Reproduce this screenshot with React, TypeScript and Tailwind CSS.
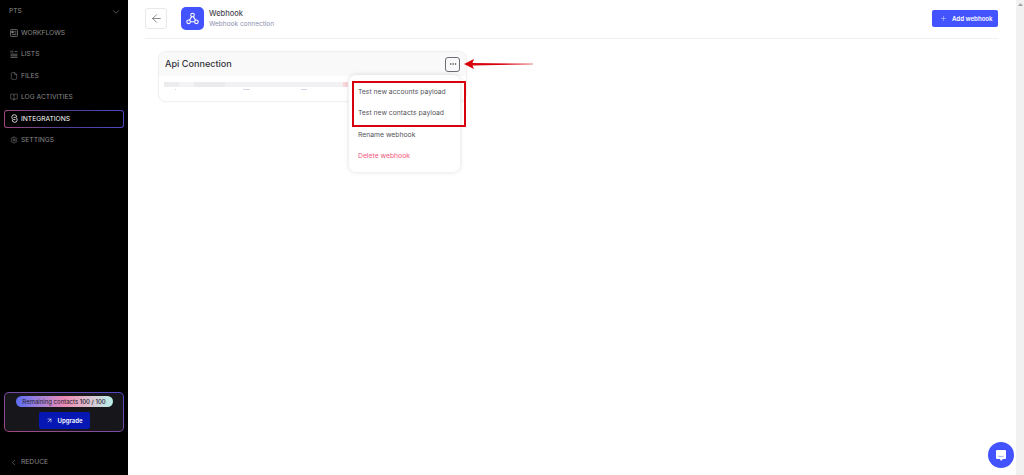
import { ArrowLeft, ArrowUpRight, BookOpen, ChevronDown, ChevronLeft, Ellipsis, File, Plus, Settings } from 'lucide-react';

function WorkflowsIcon() {
  return (
    <svg className="h-[8px] w-[8px]" viewBox="0 0 8 8" fill="none" stroke="currentColor" strokeWidth="0.7">
      <rect x="0.5" y="0.5" width="7" height="7" rx="1" />
      <rect x="1.8" y="2.2" width="1.6" height="1.6" />
      <path d="M4.5 2.4H6.4M4.5 4H6.4M1.8 5.6H6.4" />
    </svg>
  );
}

function ListsIcon() {
  return (
    <svg className="h-[8px] w-[8px]" viewBox="0 0 8 8" fill="none" stroke="currentColor" strokeWidth="0.7">
      <path d="M0.5 4.2H7.5M0.5 5.8H7.5M0.5 7.4H7.5M1 0.6V2.6M2.8 0.6V2.6M4.8 1.6H7.5" />
    </svg>
  );
}

function IntegrationsIcon() {
  return (
    <svg className="h-[9px] w-[9px]" viewBox="0 0 9 9" fill="none" stroke="currentColor" strokeWidth="0.8">
      <path d="M6.8 3.2A2.5 2.5 0 1 0 3.6 5.6L5.4 5.6" />
      <path d="M2.2 5.8A2.5 2.5 0 1 0 5.4 3.4L3.6 3.4" />
    </svg>
  );
}

function NetworkIcon() {
  return (
    <svg className="h-[13px] w-[13px]" viewBox="0 0 13 13" fill="none" stroke="currentColor" strokeWidth="1.1">
      <circle cx="6.5" cy="3" r="1.8" />
      <circle cx="2.6" cy="9.8" r="1.8" />
      <circle cx="10.4" cy="9.8" r="1.8" />
      <path d="M5.6 4.6L3.5 8.2M7.4 4.6L9.5 8.2M4.4 9.8H8.6" />
    </svg>
  );
}

const navItems = [
  { label: 'WORKFLOWS', icon: <WorkflowsIcon /> },
  { label: 'LISTS', icon: <ListsIcon /> },
  { label: 'FILES', icon: <File className="h-[8px] w-[8px]" strokeWidth={1.5} /> },
  { label: 'LOG ACTIVITIES', icon: <BookOpen className="h-[8px] w-[8px]" strokeWidth={1.5} /> },
];

export default function App() {
  return (
    <div className="flex h-[475px] w-[1024px] overflow-hidden bg-white font-['Inter',sans-serif]">
      {/* Sidebar */}
      <aside className="flex h-full w-[128px] shrink-0 flex-col bg-black px-1 text-[#8a8a8a]">
        <div className="flex h-[23px] items-center justify-between pl-[5px] pr-[3px] text-[6.7px]">
          <span>PTS</span>
          <ChevronDown className="h-[10px] w-[10px]" strokeWidth={1.5} />
        </div>
        <nav className="mt-[1px] flex flex-col gap-[3.4px]">
          {navItems.map(({ label, icon }) => (
            <div key={label} className="flex h-[18px] items-center gap-[3px] pl-[6px] text-[6.7px]">
              {icon}
              <span>{label}</span>
            </div>
          ))}
          <div className="rounded-[3px] bg-gradient-to-r from-[#a1477f] via-[#4b3f91] to-[#4f46c8] p-px">
            <div className="flex h-[16px] items-center gap-[3px] rounded-[2px] bg-black pl-[5px] text-[6.7px] text-white">
              <IntegrationsIcon />
              <span className="-ml-px">INTEGRATIONS</span>
            </div>
          </div>
          <div className="flex h-[18px] items-center gap-[3px] pl-[6px] text-[6.7px]">
            <Settings className="h-[8px] w-[8px]" strokeWidth={1.5} />
            <span>SETTINGS</span>
          </div>
        </nav>
        <div className="mt-auto rounded-[5px] bg-gradient-to-tr from-[#a1477f] to-[#4f46c8] p-px">
          <div className="flex h-[38px] flex-col items-center gap-[5px] rounded-[4px] bg-[#17171b] pt-[3px]">
            <div className="flex h-[11px] w-[97px] items-center justify-center rounded-full bg-gradient-to-r from-[#5b6cf5] via-[#ec8ab5] to-[#b8f0ea] text-[6px] text-[#1c1c2a]">
              Remaining contacts&nbsp;<span className="font-medium">100 / 100</span>
            </div>
            <div className="flex h-[17px] w-[51px] items-center justify-center gap-[5px] rounded-[2px] bg-[#0617b4] text-[6px] font-semibold text-white">
              <ArrowUpRight className="h-[7px] w-[7px]" />
              <span>Upgrade</span>
            </div>
          </div>
        </div>
        <div className="mb-[7px] mt-[24px] flex h-[12px] items-center gap-[3px] pl-[5px] text-[6.7px]">
          <ChevronLeft className="h-[9px] w-[9px]" strokeWidth={1.5} />
          <span>REDUCE</span>
        </div>
      </aside>

      {/* Main */}
      <main className="relative flex min-w-0 flex-1 flex-col">
        <header className="ml-[17px] mr-[18px] flex h-[39px] shrink-0 items-center border-b border-[#f0f0f2] pb-[1px]">
          <button className="flex h-[21px] w-[22px] items-center justify-center rounded-[3px] border border-[#e8e8ea] text-[#555]">
            <ArrowLeft className="h-[13px] w-[13px]" strokeWidth={1.25} />
          </button>
          <div className="ml-[14px] flex h-[23px] w-[23px] items-center justify-center rounded-[5px] bg-[#4353ff] text-white">
            <NetworkIcon />
          </div>
          <div className="ml-[5px] leading-none">
            <div className="text-[7.5px] font-medium text-[#4a4a52]">Webhook</div>
            <div className="mt-[4px] text-[6.5px] text-[#8b92ad]">Webhook connection</div>
          </div>
          <button className="ml-auto flex h-[17px] w-[66px] items-center gap-[5px] rounded-[2px] bg-[#4353ff] pl-[8px] text-[6.1px] font-semibold text-white">
            <Plus className="h-[7px] w-[7px] opacity-70" />
            <span>Add webhook</span>
          </button>
        </header>

        <section className="ml-[30px] mt-[12px] h-[51px] w-[309px] overflow-hidden rounded-[8px] border border-[#f0f0f1] shadow-[0_0_2px_rgba(0,0,0,0.05)]">
          <div className="flex h-[24px] items-center justify-between bg-[#f9f9f9] pl-[6px] pr-[6px]">
            <span className="text-[9.1px] font-medium text-[#33333b]">Api Connection</span>
            <button className="flex h-[15px] w-[15px] items-center justify-center rounded-[3px] border border-[#6d6d75] text-[#444]">
              <Ellipsis className="h-[8px] w-[8px]" />
            </button>
          </div>
          <div className="ml-[5px] mt-[6px] flex h-[5px] w-[184px]">
            <div className="w-[15px] bg-[#ececee]" />
            <div className="w-[15px] bg-[#f3f3f5]" />
            <div className="w-[31px] bg-[#ebebed]" />
            <div className="flex-1 bg-[#f1f1f3]" />
            <div className="w-[5px] bg-[#f8d5d9]" />
          </div>
          <div className="ml-[16px] mt-[2px] flex h-px">
            <div className="w-px bg-[#d5d5e8]" />
            <div className="ml-[67px] w-[7px] bg-[#d5d5e8]" />
            <div className="ml-[51px] w-[6px] bg-[#d5d5e8]" />
          </div>
        </section>

        {/* Dropdown */}
        <div className="absolute left-[221px] top-[75px] h-[97px] w-[111px] rounded-[7px] bg-white pt-[7px] text-[6.8px] text-[#55555c] shadow-[0_0_5px_rgba(0,0,0,0.14)]">
          <div className="flex h-[21px] items-center pl-[9px]">Test new accounts payload</div>
          <div className="flex h-[21px] items-center pl-[9px]">Test new contacts payload</div>
          <div className="flex h-[22px] items-center pl-[9px]">Rename webhook</div>
          <div className="flex h-[21px] items-center pl-[9px] text-[#f4587c]">Delete webhook</div>
        </div>

        {/* Annotations */}
        <div className="absolute left-[224px] top-[81px] h-[46px] w-[114px] border-[2px] border-[#d8000c]" />
        <svg className="absolute left-[334px] top-[57px]" width="72" height="14" viewBox="0 0 72 14">
          <path d="M2 7 L12 2 L10.5 6 L71 6.8 L71 7.2 L10.5 8.5 L12 12 Z" fill="#d8000c" />
        </svg>

        {/* Chat bubble */}
        <div className="absolute left-[860px] top-[442px] flex h-[26px] w-[26px] items-center justify-center rounded-full bg-[#4353ff]">
          <svg width="12" height="13" viewBox="0 0 12 13">
            <path d="M2 1 H10 A1 1 0 0 1 11 2 V9 A1 1 0 0 1 10 10 H8 L6 12 L5 10 H2 A1 1 0 0 1 1 9 V2 A1 1 0 0 1 2 1 Z" fill="white" />
            <path d="M3 7 Q6 8.5 9 7" stroke="#8c96ff" strokeWidth="0.8" fill="none" />
          </svg>
        </div>
      </main>

      {/* Scrollbar */}
      <div className="flex h-full w-[8px] shrink-0 justify-center bg-[#f1f1f1] pt-[3px]">
        <svg width="5" height="3" viewBox="0 0 5 3">
          <path d="M2.5 0 L5 3 H0 Z" fill="#a3a3a3" />
        </svg>
      </div>
    </div>
  );
}
